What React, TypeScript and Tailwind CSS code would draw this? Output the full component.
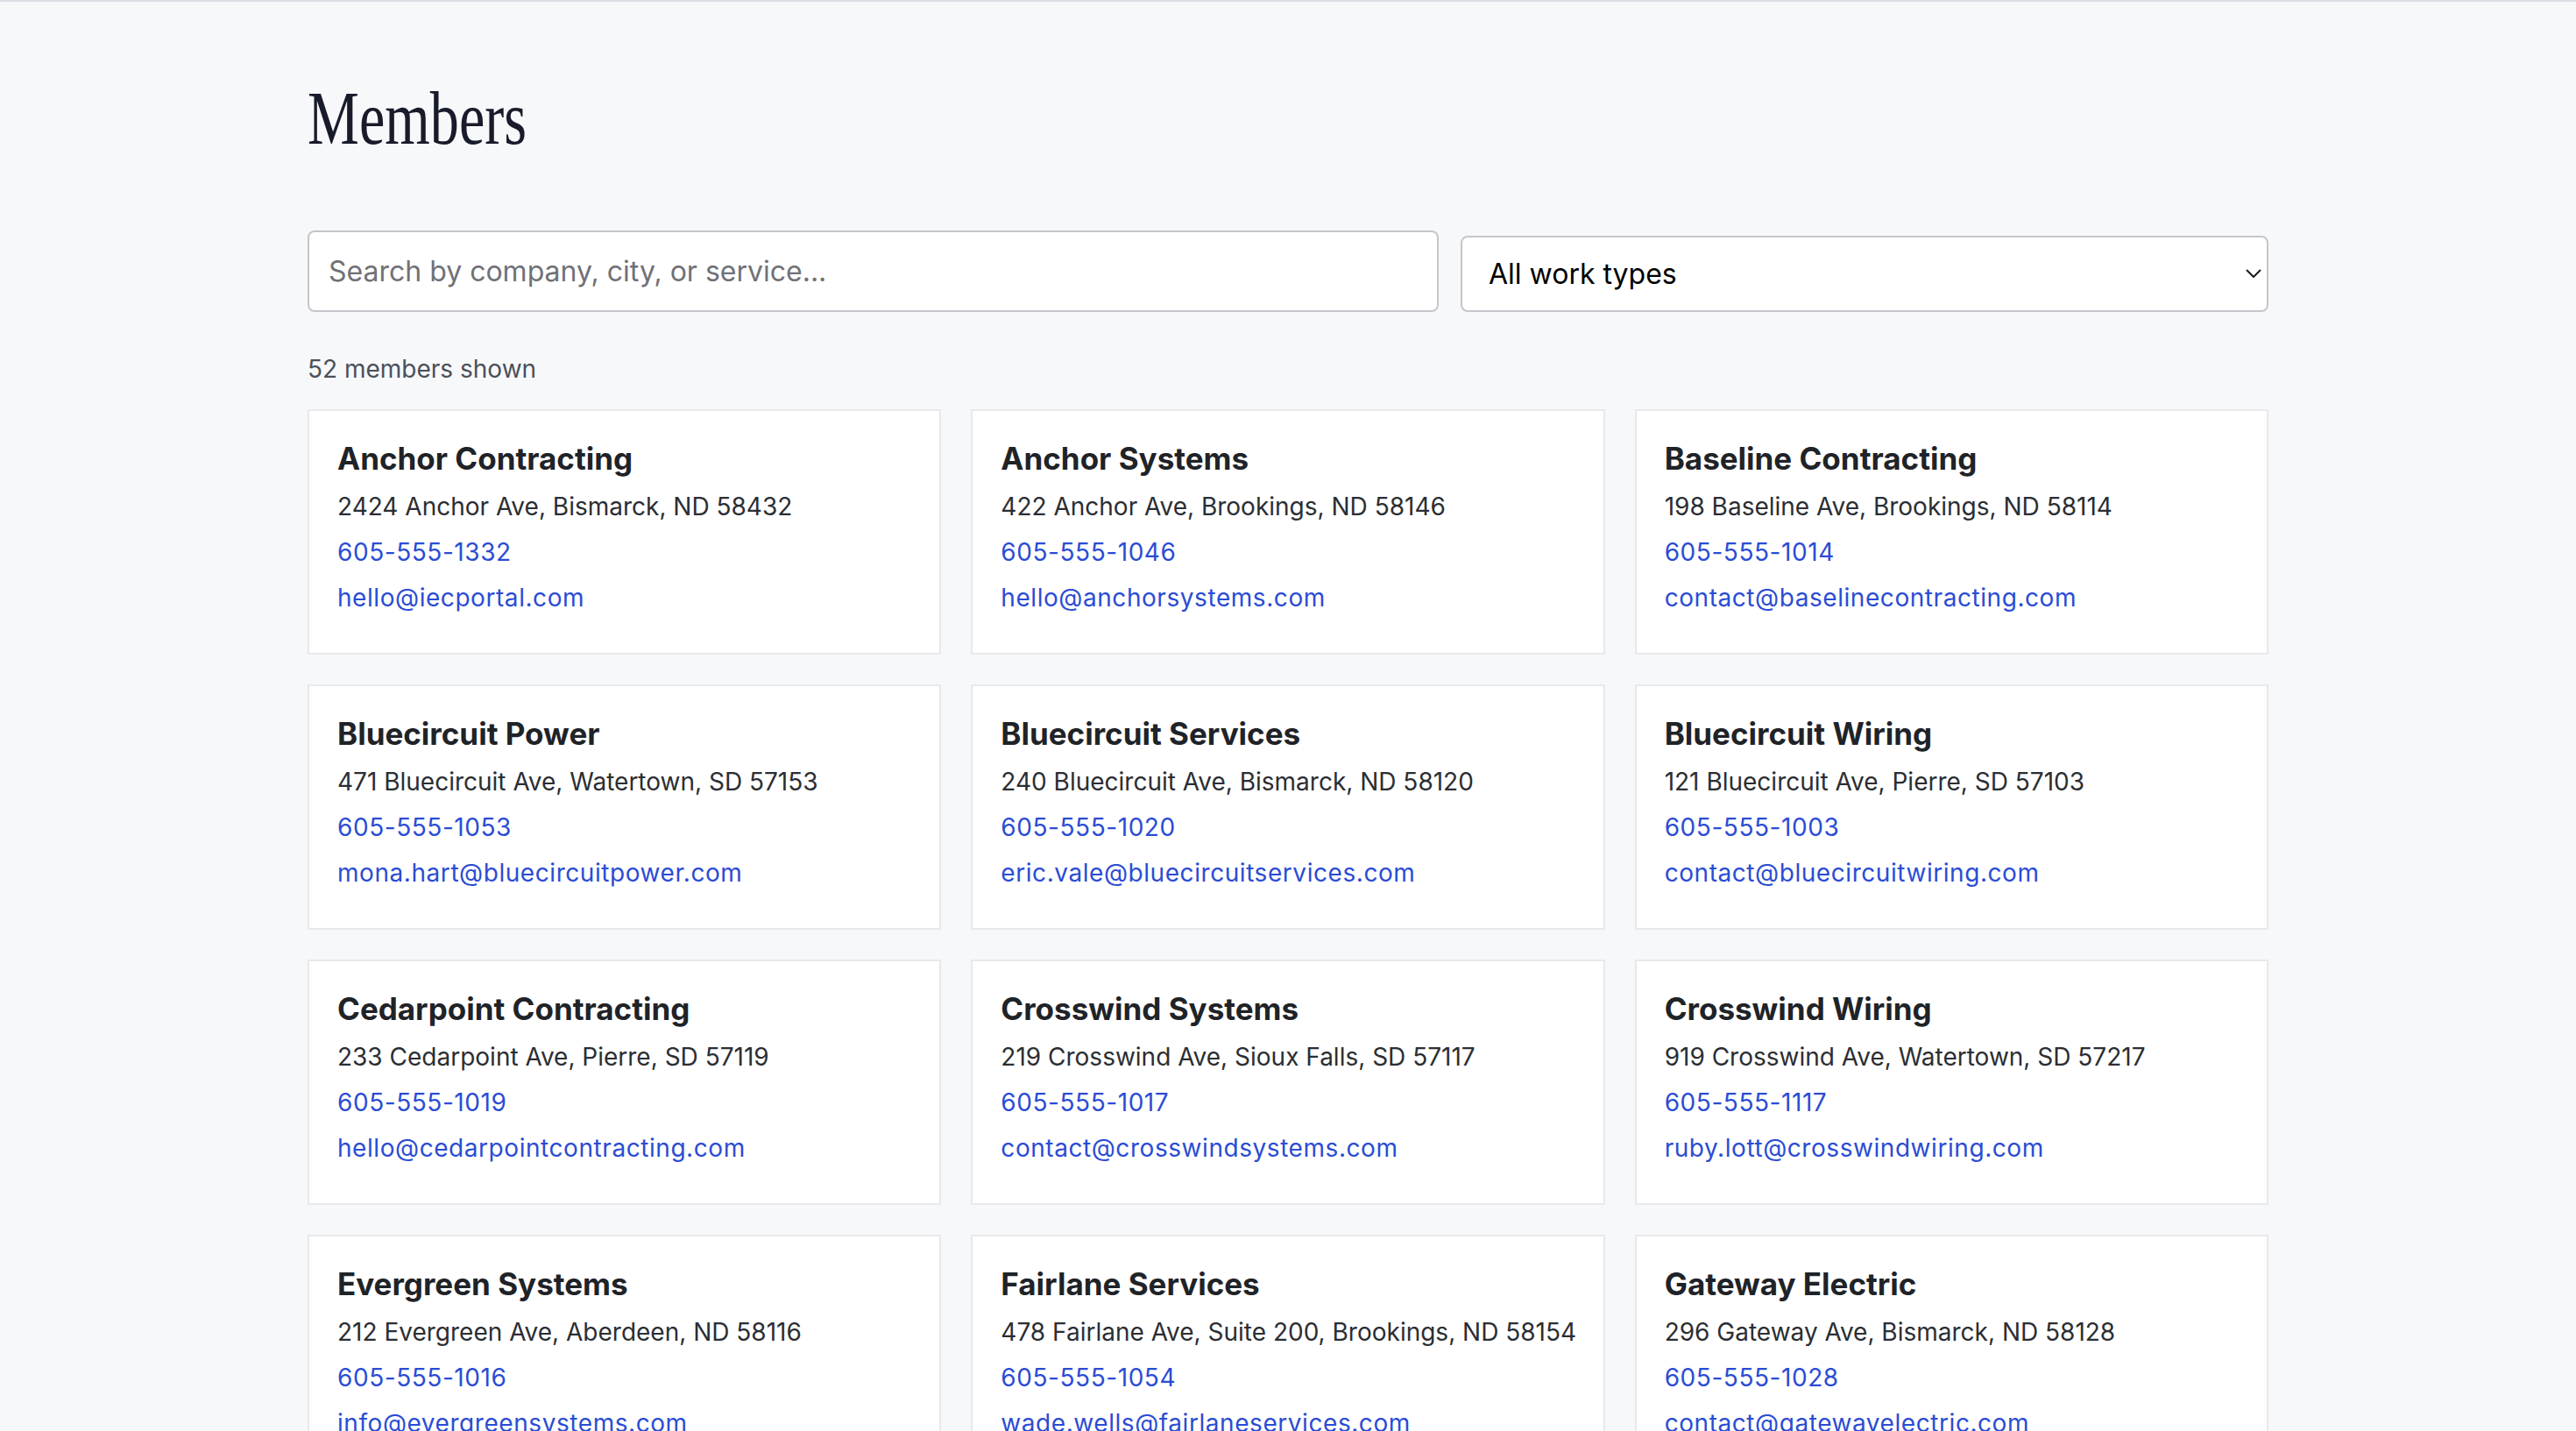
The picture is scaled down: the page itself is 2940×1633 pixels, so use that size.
import { useState } from "react";

type Member = {
  name: string;
  address: string;
  phone: string;
  email: string;
};

const members: Member[] = [
  { name: "Anchor Contracting", address: "2424 Anchor Ave, Bismarck, ND 58432", phone: "605-555-1332", email: "hello@iecportal.com" },
  { name: "Anchor Systems", address: "422 Anchor Ave, Brookings, ND 58146", phone: "605-555-1046", email: "hello@anchorsystems.com" },
  { name: "Baseline Contracting", address: "198 Baseline Ave, Brookings, ND 58114", phone: "605-555-1014", email: "contact@baselinecontracting.com" },
  { name: "Bluecircuit Power", address: "471 Bluecircuit Ave, Watertown, SD 57153", phone: "605-555-1053", email: "mona.hart@bluecircuitpower.com" },
  { name: "Bluecircuit Services", address: "240 Bluecircuit Ave, Bismarck, ND 58120", phone: "605-555-1020", email: "eric.vale@bluecircuitservices.com" },
  { name: "Bluecircuit Wiring", address: "121 Bluecircuit Ave, Pierre, SD 57103", phone: "605-555-1003", email: "contact@bluecircuitwiring.com" },
  { name: "Cedarpoint Contracting", address: "233 Cedarpoint Ave, Pierre, SD 57119", phone: "605-555-1019", email: "hello@cedarpointcontracting.com" },
  { name: "Crosswind Systems", address: "219 Crosswind Ave, Sioux Falls, SD 57117", phone: "605-555-1017", email: "contact@crosswindsystems.com" },
  { name: "Crosswind Wiring", address: "919 Crosswind Ave, Watertown, SD 57217", phone: "605-555-1117", email: "ruby.lott@crosswindwiring.com" },
  { name: "Evergreen Systems", address: "212 Evergreen Ave, Aberdeen, ND 58116", phone: "605-555-1016", email: "info@evergreensystems.com" },
  { name: "Fairlane Services", address: "478 Fairlane Ave, Suite 200, Brookings, ND 58154", phone: "605-555-1054", email: "wade.wells@fairlaneservices.com" },
  { name: "Gateway Electric", address: "296 Gateway Ave, Bismarck, ND 58128", phone: "605-555-1028", email: "contact@gatewayelectric.com" },
];

function MemberCard({ m }: { m: Member }) {
  return (
    <div className="bg-white border-2 border-[#e8e9ec] pt-[32px] pb-[37px] px-[32px]">
      <h3 className="text-[35px] leading-[44px] font-bold text-[#1f2328]">{m.name}</h3>
      <div className="mt-[7px] flex flex-col text-[28px] leading-[52px]">
        <span className="text-[#2b2e33] whitespace-nowrap">{m.address}</span>
        <a href={`tel:${m.phone}`} className="text-[#2b4cd4] tracking-[0.02em] w-fit">
          {m.phone}
        </a>
        <a href={`mailto:${m.email}`} className="text-[#2b4cd4] tracking-[0.02em] w-fit">
          {m.email}
        </a>
      </div>
    </div>
  );
}

export default function App() {
  const [query, setQuery] = useState("");
  const [workType, setWorkType] = useState("all");

  return (
    <div className="min-h-screen bg-[#f7f8fa] border-t-2 border-[#dcdde6] font-['Inter',sans-serif]">
      <div className="mx-auto w-[2238px] pt-[90px]">
        <h1 className="font-['Liberation_Serif',serif] text-[86px] leading-none text-[#171b2a] scale-x-[0.77] origin-left w-fit">
          Members
        </h1>

        <div className="mt-[85px] flex items-end gap-[25px]">
          <input
            value={query}
            onChange={(e) => setQuery(e.target.value)}
            placeholder="Search by company, city, or service..."
            className="flex-1 h-[93px] rounded-[8px] border-2 border-[#c5c6cb] bg-white px-[22px] text-[32px] text-[#1f2328] placeholder:text-[#707176] outline-none"
          />
          <div className="relative w-[922px]">
            <select
              value={workType}
              onChange={(e) => setWorkType(e.target.value)}
              className="w-full h-[87px] appearance-none rounded-[8px] border-2 border-[#c5c6cb] bg-white pl-[30px] pr-[60px] text-[32px] text-black outline-none"
            >
              <option value="all">All work types</option>
              <option value="commercial">Commercial</option>
              <option value="residential">Residential</option>
              <option value="industrial">Industrial</option>
            </select>
            <svg
              className="pointer-events-none absolute right-[8px] top-[38px] w-[18px] h-[10px]"
              viewBox="0 0 18 10"
              fill="none"
              stroke="#1a1a1a"
              strokeWidth="2"
            >
              <path d="M1 1l8 8 8-8" />
            </svg>
          </div>
        </div>

        <p className="mt-[45px] mb-[26px] text-[28px] leading-[40px] text-[#4b5058]">52 members shown</p>

        <div className="grid grid-cols-3 gap-[34px] pb-[80px]">
          {members.map((m) => (
            <MemberCard key={m.name} m={m} />
          ))}
        </div>
      </div>
    </div>
  );
}
